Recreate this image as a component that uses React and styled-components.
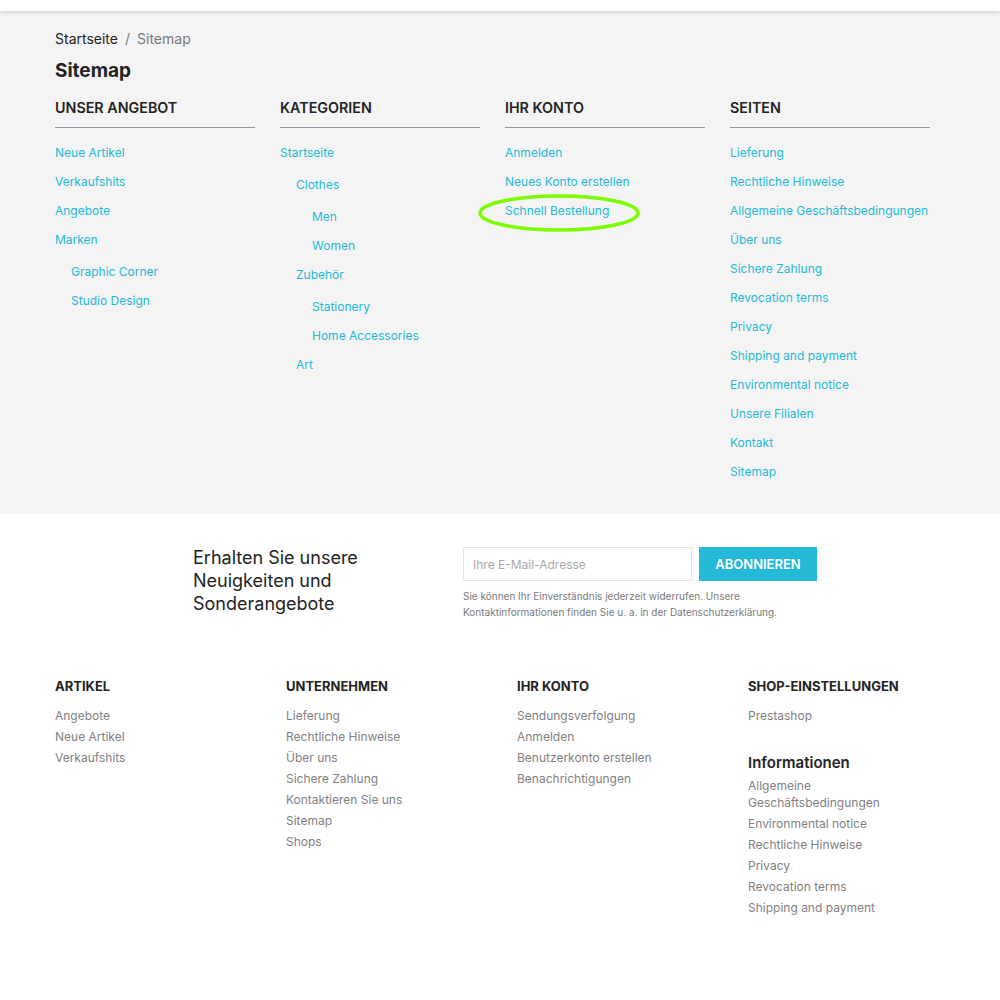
import React from 'react';
import styled, { createGlobalStyle } from 'styled-components';

const GlobalStyle = createGlobalStyle`
    body {
        margin: 0;
        background: #fff;
        font-family: 'Inter', 'Noto Sans', sans-serif;
        color: #232323;
    }
    ul {
        list-style: none;
        margin: 0;
        padding: 0;
    }
    a {
        text-decoration: none;
    }
`;

const TopBar = styled.header`
    height: 11px;
    background: #fff;
    box-shadow: 0 2px 4px rgba(0, 0, 0, 0.12);
    position: relative;
    z-index: 1;
`;

const Wrapper = styled.section`
    background: #f4f4f4;
    padding: 18px 55px 32px 55px;
`;

const Breadcrumb = styled.nav`
    font-size: 14px;
    line-height: 20px;
    color: #232323;
    span {
        color: #7a7a7a;
    }
    .sep {
        margin: 0 7px;
    }
`;

const Title = styled.h1`
    margin: 9px 0 14px 0;
    font-size: 19px;
    line-height: 26px;
    font-weight: 700;
`;

const SitemapGrid = styled.div`
    display: grid;
    grid-template-columns: repeat(4, 200px);
    column-gap: 25px;
`;

const ColumnTitle = styled.h2`
    margin: 0 0 15px 0;
    padding-bottom: 9px;
    border-bottom: 1px solid #999;
    font-size: 14.3px;
    line-height: 20px;
    font-weight: 600;
    text-transform: uppercase;
`;

const LinkList = styled.ul`
    padding-left: ${props => (props.nested ? '16px' : '0')} !important;
    margin-top: ${props => (props.nested ? '12px' : '0')} !important;

    li + li {
        margin-top: 9px;
    }
`;

const Item = styled.li`
    position: relative;
    font-size: 12px;
    line-height: 20px;
    a {
        color: #24b9d7;
    }
`;

const Circle = styled.svg`
    position: absolute;
    left: -27px;
    top: -7px;
    width: 162px;
    height: 38px;
    overflow: visible;
    pointer-events: none;
`;

const Newsletter = styled.section`
    display: grid;
    grid-template-columns: 270px 354px;
    padding: 32px 0 0 193px;
`;

const NewsTitle = styled.p`
    margin: 0;
    font-size: 18px;
    line-height: 23px;
    color: #232323;
`;

const Form = styled.form`
    display: flex;
    gap: 7px;
    margin-top: 1px;
`;

const EmailInput = styled.input`
    box-sizing: border-box;
    width: 229px;
    height: 34px;
    border: 1px solid #e2e2e2;
    padding: 0 9px;
    font-family: inherit;
    font-size: 12px;
    outline: none;
    &::placeholder {
        color: #a8a8a8;
    }
`;

const SubmitButton = styled.button`
    width: 118px;
    height: 34px;
    border: none;
    background: #24b9d7;
    color: #fff;
    font-family: inherit;
    font-size: 13px;
    font-weight: 600;
    text-transform: uppercase;
`;

const Notice = styled.p`
    margin: 7px 0 0 0;
    font-size: 10px;
    line-height: 16px;
    color: #7a7a7a;
`;

const Footer = styled.footer`
    display: grid;
    grid-template-columns: repeat(4, 231px);
    padding: 57px 0 60px 55px;
`;

const FooterTitle = styled.h3`
    margin: 0 0 12px 0;
    font-size: 13px;
    line-height: 18px;
    font-weight: 700;
    text-transform: uppercase;
    color: #232323;
`;

const SubTitle = styled.h3`
    margin: 29px 0 4px 0;
    font-size: 15px;
    line-height: 20px;
    font-weight: 600;
    color: #232323;
`;

const FooterList = styled.ul`
    max-width: ${props => (props.narrow ? '175px' : 'none')};
    li {
        font-size: 12px;
        line-height: 17px;
    }
    li + li {
        margin-top: 4px;
    }
    a {
        color: #7f7f7f;
    }
`;

const sitemap = [
    {
        title: 'Unser Angebot',
        links: [
            { label: 'Neue Artikel' },
            { label: 'Verkaufshits' },
            { label: 'Angebote' },
            { label: 'Marken', children: [{ label: 'Graphic Corner' }, { label: 'Studio Design' }] },
        ],
    },
    {
        title: 'Kategorien',
        links: [
            {
                label: 'Startseite',
                children: [
                    { label: 'Clothes', children: [{ label: 'Men' }, { label: 'Women' }] },
                    { label: 'Zubehör', children: [{ label: 'Stationery' }, { label: 'Home Accessories' }] },
                    { label: 'Art' },
                ],
            },
        ],
    },
    {
        title: 'Ihr Konto',
        links: [
            { label: 'Anmelden' },
            { label: 'Neues Konto erstellen' },
            { label: 'Schnell Bestellung', marked: true },
        ],
    },
    {
        title: 'Seiten',
        links: [
            { label: 'Lieferung' },
            { label: 'Rechtliche Hinweise' },
            { label: 'Allgemeine Geschäftsbedingungen' },
            { label: 'Über uns' },
            { label: 'Sichere Zahlung' },
            { label: 'Revocation terms' },
            { label: 'Privacy' },
            { label: 'Shipping and payment' },
            { label: 'Environmental notice' },
            { label: 'Unsere Filialen' },
            { label: 'Kontakt' },
            { label: 'Sitemap' },
        ],
    },
];

const footer = [
    { title: 'Artikel', links: ['Angebote', 'Neue Artikel', 'Verkaufshits'] },
    {
        title: 'Unternehmen',
        links: ['Lieferung', 'Rechtliche Hinweise', 'Über uns', 'Sichere Zahlung', 'Kontaktieren Sie uns', 'Sitemap', 'Shops'],
    },
    { title: 'Ihr Konto', links: ['Sendungsverfolgung', 'Anmelden', 'Benutzerkonto erstellen', 'Benachrichtigungen'] },
];

const infoLinks = [
    'Allgemeine Geschäftsbedingungen',
    'Environmental notice',
    'Rechtliche Hinweise',
    'Privacy',
    'Revocation terms',
    'Shipping and payment',
];

const Links = ({ items, nested }) => (
    <LinkList nested={nested}>
        {items.map(item => (
            <Item key={item.label}>
                <a href="#">{item.label}</a>
                {item.marked && (
                    <Circle viewBox="0 0 162 38">
                        <ellipse cx="81" cy="19" rx="79" ry="17" fill="none" stroke="#7dfb00" strokeWidth="3.5" />
                    </Circle>
                )}
                {item.children && <Links items={item.children} nested />}
            </Item>
        ))}
    </LinkList>
);

const App = () => (
    <>
        <GlobalStyle />
        <TopBar />
        <Wrapper>
            <Breadcrumb>
                Startseite<span className="sep">/</span>
                <span>Sitemap</span>
            </Breadcrumb>
            <Title>Sitemap</Title>
            <SitemapGrid>
                {sitemap.map(col => (
                    <div key={col.title}>
                        <ColumnTitle>{col.title}</ColumnTitle>
                        <Links items={col.links} />
                    </div>
                ))}
            </SitemapGrid>
        </Wrapper>
        <Newsletter>
            <NewsTitle>
                Erhalten Sie unsere
                <br />
                Neuigkeiten und
                <br />
                Sonderangebote
            </NewsTitle>
            <div>
                <Form onSubmit={e => e.preventDefault()}>
                    <EmailInput type="email" placeholder="Ihre E-Mail-Adresse" />
                    <SubmitButton type="submit">Abonnieren</SubmitButton>
                </Form>
                <Notice>
                    Sie können Ihr Einverständnis jederzeit widerrufen. Unsere
                    <br />
                    Kontaktinformationen finden Sie u. a. in der Datenschutzerklärung.
                </Notice>
            </div>
        </Newsletter>
        <Footer>
            {footer.map(col => (
                <div key={col.title}>
                    <FooterTitle>{col.title}</FooterTitle>
                    <FooterList>
                        {col.links.map(link => (
                            <li key={link}>
                                <a href="#">{link}</a>
                            </li>
                        ))}
                    </FooterList>
                </div>
            ))}
            <div>
                <FooterTitle>Shop-Einstellungen</FooterTitle>
                <FooterList>
                    <li>
                        <a href="#">Prestashop</a>
                    </li>
                </FooterList>
                <SubTitle>Informationen</SubTitle>
                <FooterList narrow>
                    {infoLinks.map(link => (
                        <li key={link}>
                            <a href="#">{link}</a>
                        </li>
                    ))}
                </FooterList>
            </div>
        </Footer>
    </>
);

export default App;
